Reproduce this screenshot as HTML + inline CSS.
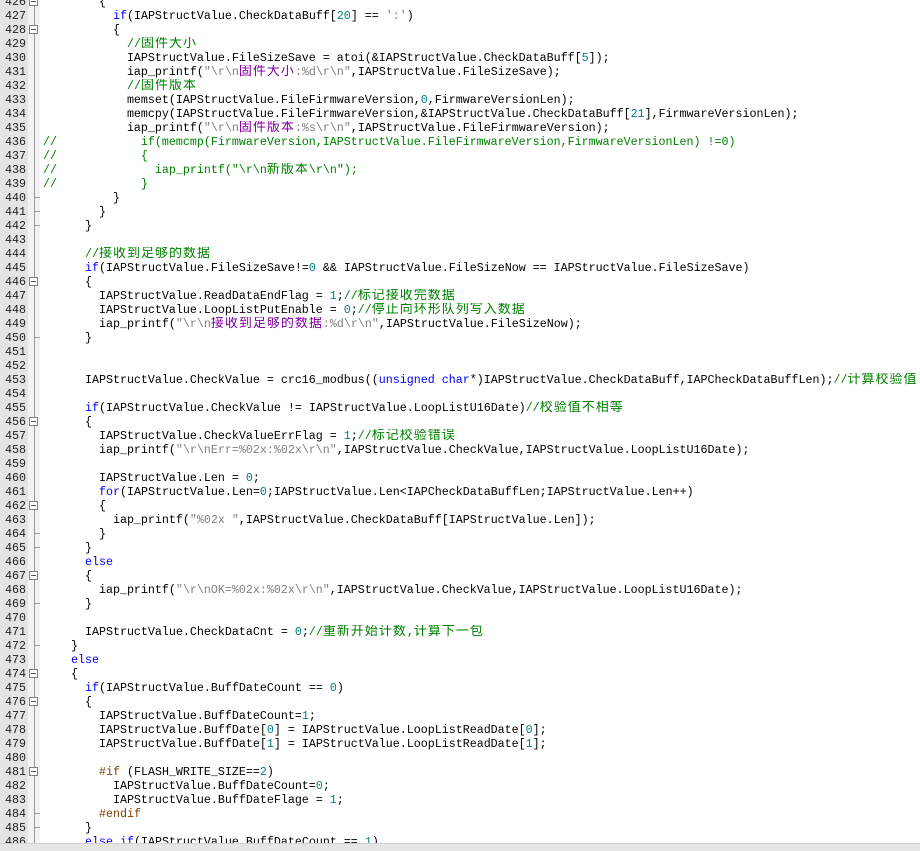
<!DOCTYPE html>
<html><head><meta charset="utf-8"><style>
html,body{margin:0;padding:0;width:920px;height:850px;overflow:hidden;background:#fff}
#g{position:absolute;left:0;top:0;width:28px;height:850px;background:#e4e4e4}
#f{position:absolute;left:28px;top:0;width:12px;height:850px;background:#f3f3f3}
#fl{position:absolute;left:34px;top:0;width:1px;height:843px;background:#9a9a9a}
#code{position:absolute;left:0;top:-5px;width:920px}
.l{position:relative;height:14px;line-height:14px;white-space:pre;font-family:"Liberation Mono",monospace;font-size:11.67px;color:#000;overflow:hidden}
.n{position:absolute;left:0;width:26px;text-align:right;color:#222;}
.t{position:absolute;left:43px;top:0;height:14px;line-height:14px}
.k{color:#0000ff}.c{color:#008000}.s{color:#808080}.m{color:#008080}.p{color:#804000}
.z{font-family:"Noto Sans CJK SC",sans-serif;font-size:13px;letter-spacing:1px;line-height:1px}
.s .z{color:#8000a0}
.b{position:absolute;left:29px;top:2px;width:9px;height:9px;border:1px solid #808080;background:#fff;box-sizing:border-box}
.b::after{content:"";position:absolute;left:1px;top:3px;width:5px;height:1px;background:#555}
.e{position:absolute;left:35px;top:6px;width:5px;height:1px;background:#9a9a9a}
#sb{position:absolute;left:0;top:843px;width:920px;height:7px;background:#e6e6e6;border-top:1px solid #d0d0d0}
</style></head><body>
<div id="g"></div><div id="f"></div><div id="fl"></div>
<div id="code">
<div class="l"><span class="n">426</span><span class="b"></span><span class="t">        {</span></div>
<div class="l"><span class="n">427</span><span class="t">          <span class="k">if</span>(IAPStructValue.CheckDataBuff[<span class="m">20</span>] == <span class="s">':'</span>)</span></div>
<div class="l"><span class="n">428</span><span class="b"></span><span class="t">          {</span></div>
<div class="l"><span class="n">429</span><span class="t">            <span class="c">//<span class="z">固件大小</span></span></span></div>
<div class="l"><span class="n">430</span><span class="t">            IAPStructValue.FileSizeSave = atoi(&amp;IAPStructValue.CheckDataBuff[<span class="m">5</span>]);</span></div>
<div class="l"><span class="n">431</span><span class="t">            iap_printf(<span class="s">"\r\n<span class="z">固件大小</span>:%d\r\n"</span>,IAPStructValue.FileSizeSave);</span></div>
<div class="l"><span class="n">432</span><span class="t">            <span class="c">//<span class="z">固件版本</span></span></span></div>
<div class="l"><span class="n">433</span><span class="t">            memset(IAPStructValue.FileFirmwareVersion,<span class="m">0</span>,FirmwareVersionLen);</span></div>
<div class="l"><span class="n">434</span><span class="t">            memcpy(IAPStructValue.FileFirmwareVersion,&amp;IAPStructValue.CheckDataBuff[<span class="m">21</span>],FirmwareVersionLen);</span></div>
<div class="l"><span class="n">435</span><span class="t">            iap_printf(<span class="s">"\r\n<span class="z">固件版本</span>:%s\r\n"</span>,IAPStructValue.FileFirmwareVersion);</span></div>
<div class="l"><span class="n">436</span><span class="t"><span class="c">//            if(memcmp(FirmwareVersion,IAPStructValue.FileFirmwareVersion,FirmwareVersionLen) !=0)</span></span></div>
<div class="l"><span class="n">437</span><span class="t"><span class="c">//            {</span></span></div>
<div class="l"><span class="n">438</span><span class="t"><span class="c">//              iap_printf("\r\n<span class="z">新版本</span>\r\n");</span></span></div>
<div class="l"><span class="n">439</span><span class="t"><span class="c">//            }</span></span></div>
<div class="l"><span class="n">440</span><span class="e"></span><span class="t">          }</span></div>
<div class="l"><span class="n">441</span><span class="e"></span><span class="t">        }</span></div>
<div class="l"><span class="n">442</span><span class="e"></span><span class="t">      }</span></div>
<div class="l"><span class="n">443</span><span class="t"></span></div>
<div class="l"><span class="n">444</span><span class="t">      <span class="c">//<span class="z">接收到足够的数据</span></span></span></div>
<div class="l"><span class="n">445</span><span class="t">      <span class="k">if</span>(IAPStructValue.FileSizeSave!=<span class="m">0</span> &amp;&amp; IAPStructValue.FileSizeNow == IAPStructValue.FileSizeSave)</span></div>
<div class="l"><span class="n">446</span><span class="b"></span><span class="t">      {</span></div>
<div class="l"><span class="n">447</span><span class="t">        IAPStructValue.ReadDataEndFlag = <span class="m">1</span>;<span class="c">//<span class="z">标记接收完数据</span></span></span></div>
<div class="l"><span class="n">448</span><span class="t">        IAPStructValue.LoopListPutEnable = <span class="m">0</span>;<span class="c">//<span class="z">停止向环形队列写入数据</span></span></span></div>
<div class="l"><span class="n">449</span><span class="t">        iap_printf(<span class="s">"\r\n<span class="z">接收到足够的数据</span>:%d\r\n"</span>,IAPStructValue.FileSizeNow);</span></div>
<div class="l"><span class="n">450</span><span class="e"></span><span class="t">      }</span></div>
<div class="l"><span class="n">451</span><span class="t"></span></div>
<div class="l"><span class="n">452</span><span class="t"></span></div>
<div class="l"><span class="n">453</span><span class="t">      IAPStructValue.CheckValue = crc16_modbus((<span class="k">unsigned</span> <span class="k">char</span>*)IAPStructValue.CheckDataBuff,IAPCheckDataBuffLen);<span class="c">//<span class="z">计算校验值</span></span></span></div>
<div class="l"><span class="n">454</span><span class="t"></span></div>
<div class="l"><span class="n">455</span><span class="t">      <span class="k">if</span>(IAPStructValue.CheckValue != IAPStructValue.LoopListU16Date)<span class="c">//<span class="z">校验值不相等</span></span></span></div>
<div class="l"><span class="n">456</span><span class="b"></span><span class="t">      {</span></div>
<div class="l"><span class="n">457</span><span class="t">        IAPStructValue.CheckValueErrFlag = <span class="m">1</span>;<span class="c">//<span class="z">标记校验错误</span></span></span></div>
<div class="l"><span class="n">458</span><span class="t">        iap_printf(<span class="s">"\r\nErr=%02x:%02x\r\n"</span>,IAPStructValue.CheckValue,IAPStructValue.LoopListU16Date);</span></div>
<div class="l"><span class="n">459</span><span class="t"></span></div>
<div class="l"><span class="n">460</span><span class="t">        IAPStructValue.Len = <span class="m">0</span>;</span></div>
<div class="l"><span class="n">461</span><span class="t">        <span class="k">for</span>(IAPStructValue.Len=<span class="m">0</span>;IAPStructValue.Len&lt;IAPCheckDataBuffLen;IAPStructValue.Len++)</span></div>
<div class="l"><span class="n">462</span><span class="b"></span><span class="t">        {</span></div>
<div class="l"><span class="n">463</span><span class="t">          iap_printf(<span class="s">"%02x "</span>,IAPStructValue.CheckDataBuff[IAPStructValue.Len]);</span></div>
<div class="l"><span class="n">464</span><span class="e"></span><span class="t">        }</span></div>
<div class="l"><span class="n">465</span><span class="e"></span><span class="t">      }</span></div>
<div class="l"><span class="n">466</span><span class="t">      <span class="k">else</span></span></div>
<div class="l"><span class="n">467</span><span class="b"></span><span class="t">      {</span></div>
<div class="l"><span class="n">468</span><span class="t">        iap_printf(<span class="s">"\r\nOK=%02x:%02x\r\n"</span>,IAPStructValue.CheckValue,IAPStructValue.LoopListU16Date);</span></div>
<div class="l"><span class="n">469</span><span class="e"></span><span class="t">      }</span></div>
<div class="l"><span class="n">470</span><span class="t"></span></div>
<div class="l"><span class="n">471</span><span class="t">      IAPStructValue.CheckDataCnt = <span class="m">0</span>;<span class="c">//<span class="z">重新开始计数</span>,<span class="z">计算下一包</span></span></span></div>
<div class="l"><span class="n">472</span><span class="e"></span><span class="t">    }</span></div>
<div class="l"><span class="n">473</span><span class="t">    <span class="k">else</span></span></div>
<div class="l"><span class="n">474</span><span class="b"></span><span class="t">    {</span></div>
<div class="l"><span class="n">475</span><span class="t">      <span class="k">if</span>(IAPStructValue.BuffDateCount == <span class="m">0</span>)</span></div>
<div class="l"><span class="n">476</span><span class="b"></span><span class="t">      {</span></div>
<div class="l"><span class="n">477</span><span class="t">        IAPStructValue.BuffDateCount=<span class="m">1</span>;</span></div>
<div class="l"><span class="n">478</span><span class="t">        IAPStructValue.BuffDate[<span class="m">0</span>] = IAPStructValue.LoopListReadDate[<span class="m">0</span>];</span></div>
<div class="l"><span class="n">479</span><span class="t">        IAPStructValue.BuffDate[<span class="m">1</span>] = IAPStructValue.LoopListReadDate[<span class="m">1</span>];</span></div>
<div class="l"><span class="n">480</span><span class="t"></span></div>
<div class="l"><span class="n">481</span><span class="b"></span><span class="t">        <span class="p">#if</span> (FLASH_WRITE_SIZE==<span class="m">2</span>)</span></div>
<div class="l"><span class="n">482</span><span class="t">          IAPStructValue.BuffDateCount=<span class="m">0</span>;</span></div>
<div class="l"><span class="n">483</span><span class="t">          IAPStructValue.BuffDateFlage = <span class="m">1</span>;</span></div>
<div class="l"><span class="n">484</span><span class="e"></span><span class="t">        <span class="p">#endif</span></span></div>
<div class="l"><span class="n">485</span><span class="e"></span><span class="t">      }</span></div>
<div class="l"><span class="n">486</span><span class="t">      <span class="k">else</span> <span class="k">if</span>(IAPStructValue.BuffDateCount == <span class="m">1</span>)</span></div>
</div>
<div id="sb"></div>
</body></html>
